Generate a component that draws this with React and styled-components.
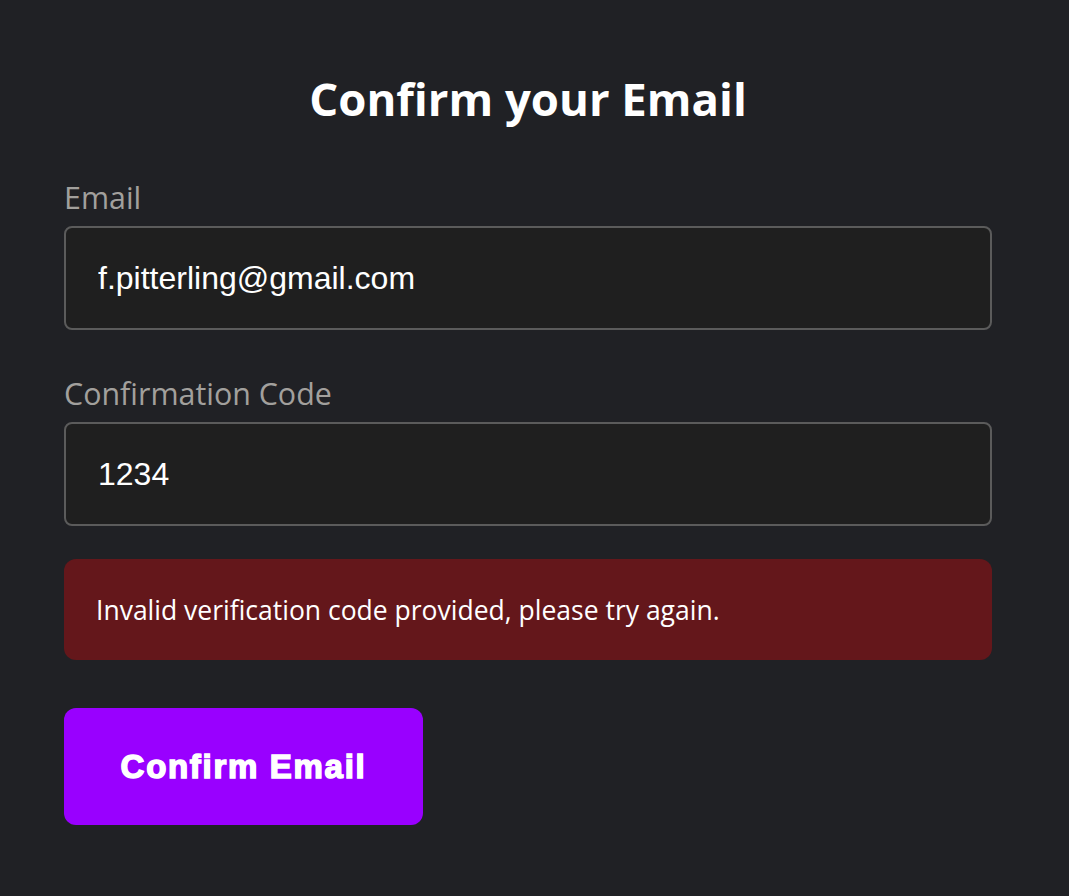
import React from "react";
import styled, { createGlobalStyle } from "styled-components";

const GlobalStyle = createGlobalStyle`
  html, body {
    margin: 0;
    padding: 0;
    background: #202125;
  }
  body {
    font-family: "Open Sans", "Noto Sans", sans-serif;
  }
`;

const Page = styled.div`
  min-height: 896px;
  padding: 64px 77px 0 64px;
  box-sizing: border-box;
`;

const Form = styled.form`
  width: 928px;
  display: flex;
  flex-direction: column;
`;

const Title = styled.h1`
  margin: 0 0 46px;
  text-align: center;
  color: #fff;
  font-family: "Open Sans", sans-serif;
  font-weight: 700;
  font-size: 45.5px;
  line-height: 68px;
`;

const Fields = styled.div`
  display: flex;
  flex-direction: column;
  gap: 44px;
  margin-bottom: 33px;
`;

const Field = styled.div`
  display: flex;
  flex-direction: column;
  gap: 8px;
`;

const Label = styled.label`
  color: #a2a09d;
  font-size: 30.4px;
  line-height: 40px;
`;

const Input = styled.input`
  box-sizing: border-box;
  height: 104px;
  padding: 0 32px;
  background: #1f1f1f;
  border: 2px solid #5b5b5b;
  border-radius: 8px;
  color: #fff;
  font-family: "Liberation Sans", Arial, sans-serif;
  font-size: 32px;
  outline: none;
`;

const ErrorBox = styled.div`
  box-sizing: border-box;
  height: 101px;
  display: flex;
  align-items: center;
  padding: 0 32px;
  background: #64171b;
  border-radius: 12px;
  color: #fff;
  font-size: 26.5px;
  margin-bottom: 48px;
`;

const Button = styled.button`
  align-self: flex-start;
  width: 359px;
  height: 117px;
  border: none;
  border-radius: 12px;
  background: #9900ff;
  color: #fff;
  font-family: "Liberation Sans", Arial, sans-serif;
  font-weight: 700;
  font-size: 33px;
  letter-spacing: 1.7px;
  -webkit-text-stroke: 1.5px #fff;
  cursor: pointer;
`;

export default function App() {
  return (
    <Page>
      <GlobalStyle />
      <Form onSubmit={(e) => e.preventDefault()}>
        <Title>Confirm your Email</Title>
        <Fields>
          <Field>
            <Label htmlFor="email">Email</Label>
            <Input id="email" defaultValue="f.pitterling@gmail.com" />
          </Field>
          <Field>
            <Label htmlFor="code">Confirmation Code</Label>
            <Input id="code" defaultValue="1234" />
          </Field>
        </Fields>
        <ErrorBox>Invalid verification code provided, please try again.</ErrorBox>
        <Button type="submit">Confirm Email</Button>
      </Form>
    </Page>
  );
}
